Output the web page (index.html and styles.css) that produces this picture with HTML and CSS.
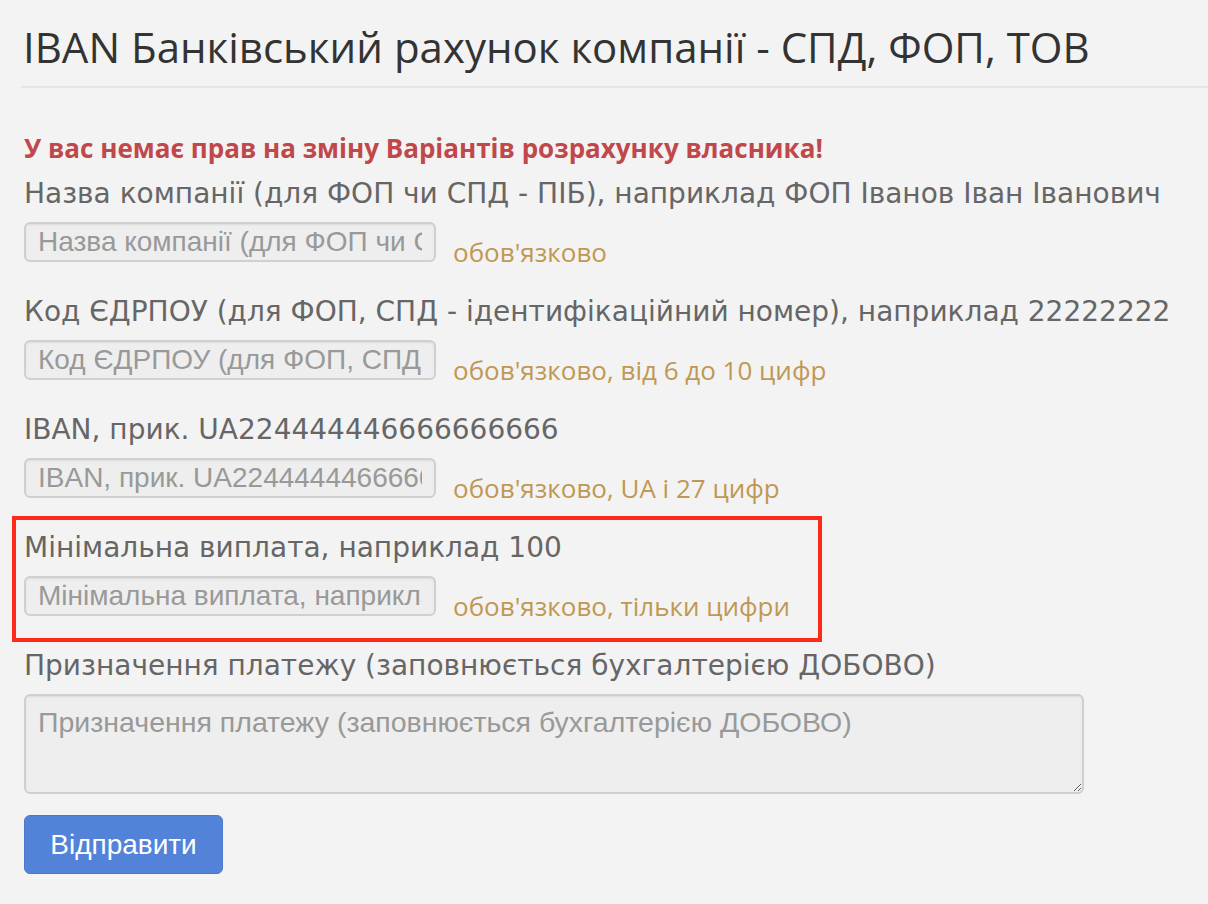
FILE: index.html
```html
<!DOCTYPE html>
<html lang="uk">
<head>
<meta charset="utf-8">
<title>IBAN Банківський рахунок компанії</title>
<link rel="stylesheet" href="styles.css">
</head>
<body>

<div class="page">
  <h1 class="page-title">IBAN Банківський рахунок компанії - СПД, ФОП, ТОВ</h1>

  <form class="iban-form">
    <p class="alert-error">У вас немає прав на зміну Варіантів розрахунку власника!</p>

    <div class="field">
      <label class="field-label" for="company">Назва компанії (для ФОП чи СПД - ПІБ), наприклад ФОП Іванов Іван Іванович</label>
      <div class="field-row">
        <input class="field-input" id="company" type="text" placeholder="Назва компанії (для ФОП чи СПД - ПІБ), наприклад ФОП Іванов Іван Іванович">
        <span class="field-hint">обов'язково</span>
      </div>
    </div>

    <div class="field">
      <label class="field-label" for="edrpou">Код ЄДРПОУ (для ФОП, СПД - ідентифікаційний номер), наприклад 22222222</label>
      <div class="field-row">
        <input class="field-input" id="edrpou" type="text" placeholder="Код ЄДРПОУ (для ФОП, СПД - ідентифікаційний номер), наприклад 22222222">
        <span class="field-hint">обов'язково, від 6 до 10 цифр</span>
      </div>
    </div>

    <div class="field">
      <label class="field-label" for="iban">IBAN, прик. UA224444446666666666</label>
      <div class="field-row">
        <input class="field-input" id="iban" type="text" placeholder="IBAN, прик. UA224444446666666666">
        <span class="field-hint">обов'язково, UA і 27 цифр</span>
      </div>
    </div>

    <div class="field field-marked">
      <label class="field-label" for="minpay">Мінімальна виплата, наприклад 100</label>
      <div class="field-row">
        <input class="field-input" id="minpay" type="text" placeholder="Мінімальна виплата, наприклад 100">
        <span class="field-hint">обов'язково, тільки цифри</span>
      </div>
    </div>

    <div class="field field-last">
      <label class="field-label" for="purpose">Призначення платежу (заповнюється бухгалтерією ДОБОВО)</label>
      <textarea class="field-text" id="purpose" placeholder="Призначення платежу (заповнюється бухгалтерією ДОБОВО)"></textarea>
    </div>

    <button class="btn-submit" type="button">Відправити</button>
  </form>
</div>

</body>
</html>
```

FILE: styles.css
```css
BODY {
    margin : 0;
    background-color : #f3f3f3;
    font-family : "Open Sans", sans-serif;
}

.page {
    padding : 18px 0 0 21px;
}

.page-title {
    margin : 0;
    padding : 0 0 10px 2px;
    font-size : 42px;
    font-weight : normal;
    line-height : 58px;
    color : #333;
    border-bottom : 2px #e5e5e5 solid;
}

.iban-form {
    padding : 0 0 0 3px;
}

.alert-error {
    margin : 0;
    padding-top : 42px;
    height : 36px;
    font-size : 26px;
    line-height : 36px;
    font-weight : bold;
    color : #c0484a;
}

.field {
    margin-bottom : 30px;
}
.field:first-of-type {
    margin-top : 8px;
}

.field-label {
    display : block;
    height : 36px;
    margin-bottom : 12px;
    font-family : "DejaVu Sans", Verdana, sans-serif;
    font-size : 28px;
    line-height : 40px;
    color : #666;
    white-space : nowrap;
}

.field-row {
    display : flex;
    align-items : flex-end;
}

.field-input,
.field-text {
    box-sizing : border-box;
    margin : 0;
    border : 2px #d0d0d0 solid;
    border-radius : 6px;
    background-color : #eee;
    box-shadow : inset 0 1px 2px rgba(0, 0, 0, 0.08);
    font-family : "Liberation Sans", Arial, sans-serif;
    font-size : 28px;
    color : #555;
    outline : none;
}
.field-input::placeholder,
.field-text::placeholder {
    color : #999;
}

.field-input {
    width : 412px;
    height : 40px;
    padding : 0 12px;
}

.field-hint {
    margin-left : 17px;
    font-size : 26px;
    line-height : 20px;
    color : #c09853;
}

/* red frame drawn round the min payment block */
.field-marked {
    box-sizing : border-box;
    width : 810px;
    margin : -12px 0 4px -12px;
    padding : 8px 8px 22px 8px;
    border : 4px #ff2a1a solid;
}

.field-last {
    margin-bottom : 21px;
}

.field-text {
    display : block;
    width : 1060px;
    height : 100px;
    padding : 10px 12px;
    font-size : 28.5px;
    resize : both;
}

.btn-submit {
    display : block;
    width : 199px;
    height : 59px;
    margin : 0;
    border : 1px #4a78cc solid;
    border-radius : 6px;
    background-color : #5382d9;
    color : #fff;
    font-family : "Liberation Sans", Arial, sans-serif;
    font-size : 28px;
    cursor : pointer;
}
```
